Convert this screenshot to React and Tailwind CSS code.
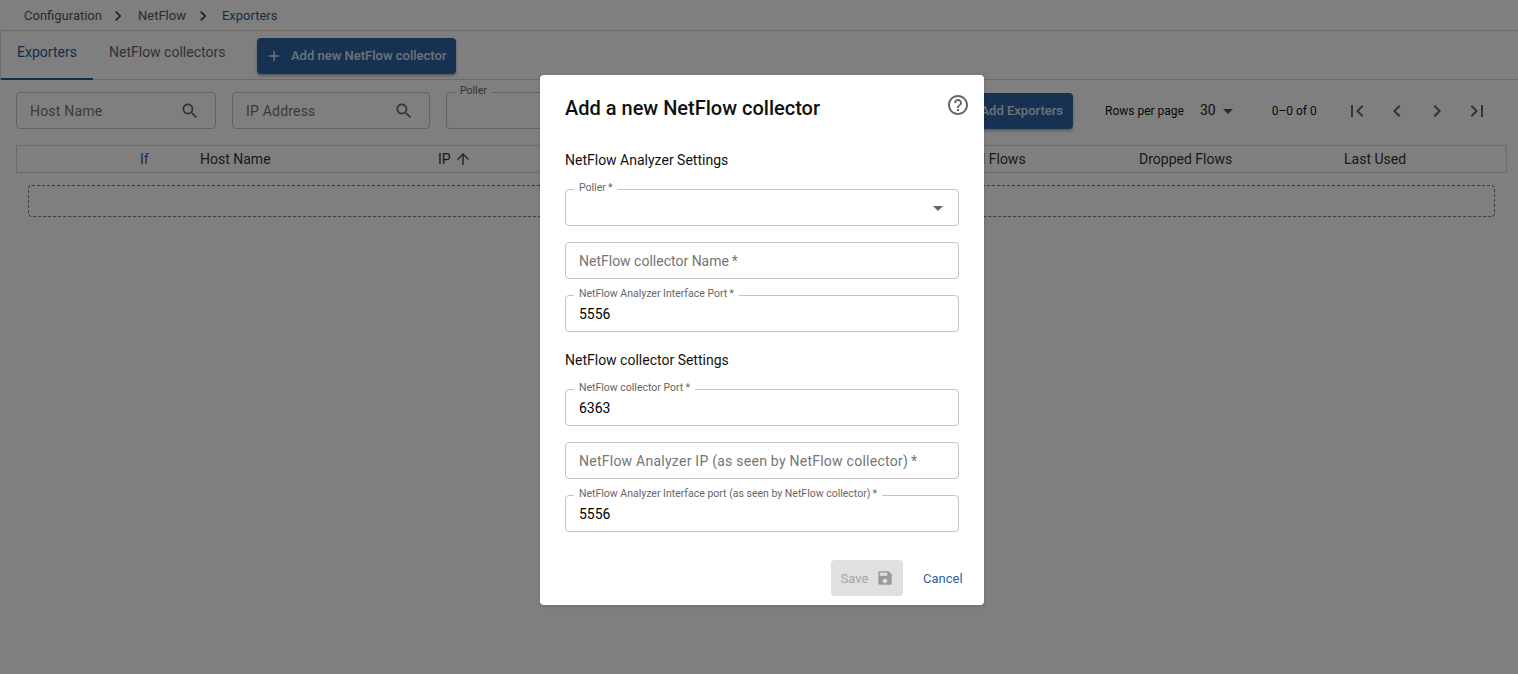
import React from "react";

const ICON = {
  search: "M15.5 14h-.79l-.28-.27C15.41 12.59 16 11.11 16 9.5 16 5.91 13.09 3 9.5 3S3 5.91 3 9.5 5.91 16 9.5 16c1.61 0 3.09-.59 4.23-1.57l.27.28v.79l5 4.99L20.49 19l-4.99-5zm-6 0C7.01 14 5 11.99 5 9.5S7.01 5 9.5 5 14 7.01 14 9.5 11.99 14 9.5 14z",
  chevronR: "M10 6 8.59 7.41 13.17 12l-4.58 4.59L10 18l6-6z",
  chevronL: "M15.41 7.41 14 6l-6 6 6 6 1.41-1.41L10.83 12z",
  first: "M18.41 16.59 13.82 12l4.59-4.59L17 6l-6 6 6 6zM6 6h2v12H6z",
  last: "M5.59 7.41 10.18 12l-4.59 4.59L7 18l6-6-6-6zM16 6h2v12h-2z",
  plus: "M19 13h-6v6h-2v-6H5v-2h6V5h2v6h6v2z",
  arrowUp: "M4 12l1.41 1.41L11 7.83V20h2V7.83l5.58 5.59L20 12l-8-8-8 8z",
  drop: "M7 10l5 5 5-5z",
  help: "M11 18h2v-2h-2v2zm1-16C6.48 2 2 6.48 2 12s4.48 10 10 10 10-4.48 10-10S17.52 2 12 2zm0 18c-4.41 0-8-3.59-8-8s3.59-8 8-8 8 3.59 8 8-3.59 8-8 8zm0-14c-2.21 0-4 1.79-4 4h2c0-1.1.9-2 2-2s2 .9 2 2c0 2-3 1.75-3 5h2c0-2.25 3-2.5 3-5 0-2.21-1.79-4-4-4z",
  save: "M17 3H5c-1.11 0-2 .9-2 2v14c0 1.1.89 2 2 2h14c1.1 0 2-.9 2-2V7l-4-4zm-5 16c-1.66 0-3-1.34-3-3s1.34-3 3-3 3 1.34 3 3-1.34 3-3 3zm3-10H5V5h10v4z",
};

function Icon({ d, className }) {
  return (
    <svg viewBox="0 0 24 24" fill="currentColor" className={className}>
      <path d={d} />
    </svg>
  );
}

function Field({ label, value, placeholder, select, tight }) {
  return (
    <div className="relative h-[37px] rounded border border-[#c4c4c4] flex items-center pl-[13px] pr-2 bg-white">
      {label && (
        <span className="absolute left-[8px] top-[-9px] bg-white px-[5px] text-[10.5px] leading-[14px] text-[#666666] whitespace-nowrap">
          {label}
        </span>
      )}
      {value && <span className="pt-[1px] text-[14px] text-black">{value}</span>}
      {placeholder && (
        <span className={`pt-[1px] text-[14px] text-[#757575] ${tight ? "" : "tracking-[0.25px]"}`}>{placeholder}</span>
      )}
      {select && <Icon d={ICON.drop} className="ml-auto w-6 h-6 text-[#666666] mt-[1px]" />}
    </div>
  );
}

function SearchBox({ label, width }) {
  return (
    <div className={`h-[37px] ${width} shrink-0 rounded border border-[#c4c4c4] flex items-center pl-[13px] pr-[15px]`}>
      <span className="pt-[1px] text-[14px] text-[#757575] tracking-[0.2px]">{label}</span>
      <Icon d={ICON.search} className="ml-auto w-[20px] h-[20px] text-[#666666]" />
    </div>
  );
}

const COLUMNS = [
  { label: "If", w: "w-[60px]", blue: true },
  { label: "Host Name", w: "w-[238px]" },
  { label: "IP", w: "w-[488px]", arrow: true },
  { label: "Total Flows", w: "w-[213px] pl-[28px]" },
  { label: "Dropped Flows", w: "w-[205px]" },
  { label: "Last Used", w: "w-[120px]" },
];

export default function App() {
  return (
    <div className="relative w-[1518px] h-[674px] overflow-hidden bg-white font-['Roboto',sans-serif] text-[#333333]">
      {/* Breadcrumb */}
      <div className="h-[31px] border-b border-[#d6d6d6] flex items-center pl-[24px] text-[13px] pt-[1px]">
        <span className="text-[#555555]">Configuration</span>
        <Icon d={ICON.chevronR} className="w-[20px] h-[20px] ml-[6px] mr-[10px] text-[#444444]" />
        <span className="text-[#555555]">NetFlow</span>
        <Icon d={ICON.chevronR} className="w-[20px] h-[20px] ml-[7px] mr-[9px] text-[#444444]" />
        <span className="text-[#2b5a94]">Exporters</span>
      </div>

      {/* Tabs */}
      <div className="h-[49px] border-b border-l border-[#d6d6d6] flex items-start">
        <div className="relative h-[48px] w-[92px] flex justify-center pt-[11px] text-[14px] text-[#2b5a94]">
          Exporters
          <span className="absolute left-0 right-0 bottom-[-1px] h-[2px] bg-[#2b5a94]" />
        </div>
        <div className="h-[48px] w-[164px] pl-[16px] pt-[11px] text-[14px] text-[#666666]">
          NetFlow collectors
        </div>
        <button className="mt-[7px] h-[36px] w-[199px] rounded bg-[#2c62a5] shadow-[0_2px_3px_rgba(0,0,0,0.3)] text-[#dbe5f2] flex items-center pl-[8px] text-[13px] font-medium">
          <Icon d={ICON.plus} className="w-[18px] h-[18px] mr-[8px]" />
          <span className="whitespace-nowrap">Add new NetFlow collector</span>
        </button>
      </div>

      {/* Filters */}
      <div className="flex items-center h-[37px] mt-[12px] pl-[16px]">
        <SearchBox label="Host Name" width="w-[200px]" />
        <div className="w-[16px] shrink-0" />
        <SearchBox label="IP Address" width="w-[198px]" />
        <div className="w-[16px] shrink-0" />
        <div className="relative h-[37px] w-[260px] shrink-0 rounded border border-[#c4c4c4]">
          <span className="absolute left-[8px] top-[-9px] bg-white px-[5px] text-[10.5px] leading-[14px] text-[#666666]">Poller</span>
        </div>
        <button className="w-[103px] h-[36px] shrink-0 ml-auto rounded bg-[#2c62a5] shadow-[0_2px_3px_rgba(0,0,0,0.3)] text-[#dbe5f2] text-[13px] font-medium text-right pr-[10px]">
          Add Exporters
        </button>
        <div className="shrink-0 w-[445px] flex items-center">
          <span className="ml-[32px] text-[12px] text-[#111111]">Rows per page</span>
          <span className="ml-[16px] text-[14px] text-[#222222]">30</span>
          <Icon d={ICON.drop} className="w-6 h-6 text-[#555555]" />
          <span className="ml-[32px] text-[12px] text-[#111111]">0–0 of 0</span>
          <div className="ml-[28px] flex items-center gap-[16px] text-[#666666]">
            <Icon d={ICON.first} className="w-6 h-6" />
            <Icon d={ICON.chevronL} className="w-6 h-6" />
            <Icon d={ICON.chevronR} className="w-6 h-6" />
            <Icon d={ICON.last} className="w-6 h-6" />
          </div>
        </div>
      </div>

      {/* Table head */}
      <div className="ml-[16px] mt-[16px] w-[1491px] h-[28px] border border-[#d6d6d6] flex items-center pl-[123px] text-[14px] text-[#333333]">
        {COLUMNS.map((c) => (
          <div key={c.label} className={`${c.w} shrink-0 flex items-center whitespace-nowrap ${c.blue ? "text-[#2b5a94]" : ""}`}>
            {c.label}
            {c.arrow && <Icon d={ICON.arrowUp} className="w-[18px] h-[18px] ml-[3px] text-[#555555]" />}
          </div>
        ))}
      </div>

      {/* Empty drop area */}
      <div className="ml-[28px] mt-[12px] w-[1467px] h-[32px] rounded border border-dashed border-[#777777]" />

      {/* Backdrop */}
      <div className="absolute inset-0 bg-black/50" />

      {/* Dialog */}
      <div className="absolute left-[540px] top-[75px] w-[444px] h-[530px] rounded bg-white shadow-[0_1px_4px_rgba(0,0,0,0.15)] flex flex-col">
        <div className="flex justify-between pl-[25px] pr-[14px] pt-[20px]">
          <h2 className="text-[20px] leading-[26px] font-medium text-[#111111]">Add a new NetFlow collector</h2>
          <Icon d={ICON.help} className="w-6 h-6 mt-[-2px] text-[#666666]" />
        </div>
        <div className="pl-[25px] pr-[25px] mt-[29px]">
          <div className="text-[14px] leading-[20px] text-[#111111]">NetFlow Analyzer Settings</div>
          <div className="mt-[19px] flex flex-col gap-[16px]">
            <Field label={"Poller\u2009*"} select />
            <Field tight placeholder={"NetFlow collector Name\u2009*"} />
            <Field label={"NetFlow Analyzer Interface Port\u2009*"} value="5556" />
          </div>
          <div className="mt-[18px] text-[14px] leading-[20px] text-[#111111]">NetFlow collector Settings</div>
          <div className="mt-[19px] flex flex-col gap-[16px]">
            <Field label={"NetFlow collector Port\u2009*"} value="6363" />
            <Field placeholder={"NetFlow Analyzer IP (as seen by NetFlow collector)\u2009*"} />
            <Field label={"NetFlow Analyzer Interface port (as seen by NetFlow collector)\u2009*"} value="5556" />
          </div>
        </div>
        <div className="mt-[28px] flex items-center pl-[291px]">
          <button className="w-[72px] h-[36px] rounded bg-[#e0e0e0] text-[#a6a6a6] text-[13px] flex items-center justify-center pl-[1px]">
            <span className="pt-[1px]">Save</span>
            <Icon d={ICON.save} className="w-[18px] h-[18px] ml-[8px] text-[#9a9a9a]" />
          </button>
          <span className="ml-[20px] text-[13px] text-[#2b62a8] mt-[2px]">Cancel</span>
        </div>
      </div>
    </div>
  );
}
